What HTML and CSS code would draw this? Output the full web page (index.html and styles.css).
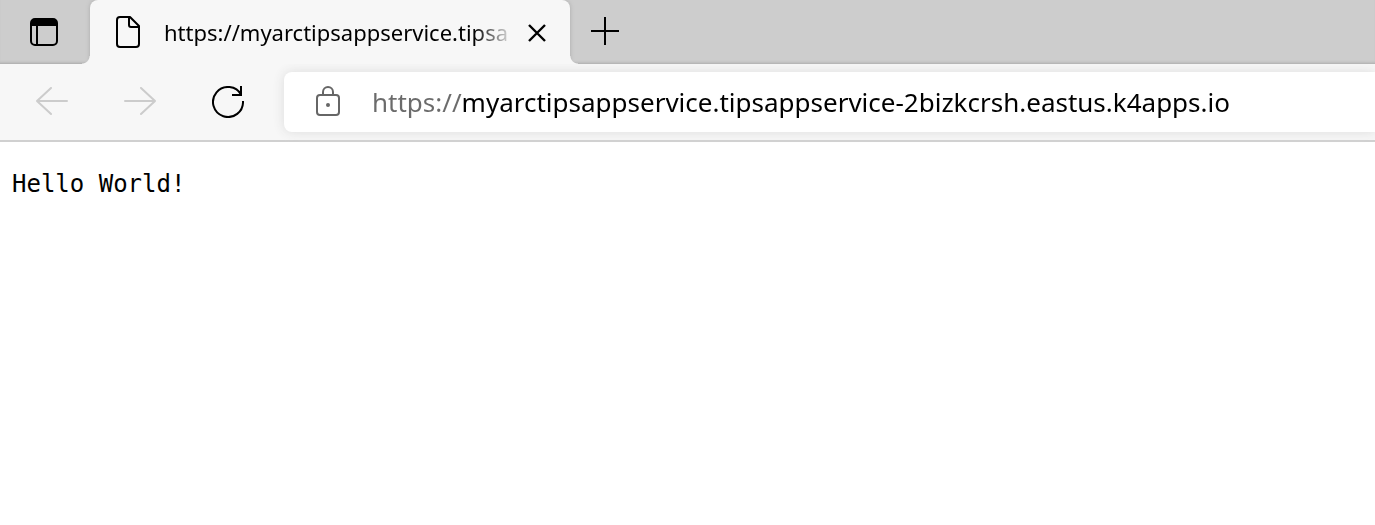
FILE: index.html
```html
<!DOCTYPE html>
<html lang="en">
<head>
<meta charset="utf-8">
<title>https://myarctipsappservice.tipsappservice-2bizkcrsh.eastus.k4apps.io</title>
<link rel="stylesheet" href="styles.css">
</head>
<body>
<header class="browser">
  <div class="tab-strip">
    <button class="icon-button tab-actions" type="button" aria-label="Tab actions menu">
      <svg width="28" height="28" viewBox="0 0 28 28" fill="none" stroke="#000" stroke-width="2"><rect x="1" y="1" width="26" height="26" rx="4"/><path d="M1 8V5a4 4 0 0 1 4-4h18a4 4 0 0 1 4 4v3z" fill="#000" stroke="none"/><path d="M1 7h26M7 7v20"/></svg>
    </button>
    <div class="tab">
      <svg class="tab-icon" width="24" height="32" viewBox="0 0 24 32" fill="none" stroke="#000" stroke-width="2" stroke-linejoin="round"><path d="M4 1h10l9 9v18a3 3 0 0 1-3 3H4a3 3 0 0 1-3-3V4a3 3 0 0 1 3-3z"/><path d="M13 1v8a2 2 0 0 0 2 2h8"/></svg>
      <span class="tab-title">https://myarctipsappservice.tipsa</span>
      <button class="icon-button" type="button" aria-label="Close tab">
        <svg width="18" height="20" viewBox="0 0 18 20" fill="none" stroke="#000" stroke-width="2.400"><path d="M1 3l16 16M17 3L1 19"/></svg>
      </button>
    </div>
    <button class="icon-button new-tab" type="button" aria-label="New tab">
      <svg width="28" height="28" viewBox="0 0 28 28" fill="none" stroke="#000" stroke-width="2"><path d="M14 0v28M0 14h28"/></svg>
    </button>
  </div>
  <div class="toolbar">
    <nav class="nav-buttons" aria-label="History">
      <button class="icon-button" type="button" aria-label="Back" disabled>
        <svg width="32" height="30" viewBox="0 0 32 30" fill="none" stroke="#ccc" stroke-width="2" stroke-linecap="round" stroke-linejoin="round"><path d="M15 1L1 14l14 13M1 14h30"/></svg>
      </button>
      <button class="icon-button" type="button" aria-label="Forward" disabled>
        <svg width="32" height="30" viewBox="0 0 32 30" fill="none" stroke="#ccc" stroke-width="2" stroke-linecap="round" stroke-linejoin="round"><path d="M17 1l14 13-14 13M31 14H1"/></svg>
      </button>
      <button class="icon-button" type="button" aria-label="Refresh">
        <svg width="32" height="32" viewBox="0 0 32 32" fill="none" stroke="#000" stroke-width="2"><path d="M30.970 15A15 15 0 1 1 29.270 9"/><path d="M29 0v9h-9"/></svg>
      </button>
    </nav>
    <div class="address-bar">
      <svg class="lock" width="24" height="32" viewBox="0 0 24 32" fill="none" stroke="#666" stroke-width="2"><rect x="1" y="9" width="22" height="20" rx="3"/><path d="M7 9V6a5 5 0 0 1 10 0v3"/><circle cx="12" cy="19" r="2" fill="#666" stroke="none"/></svg>
      <input class="address" type="text" aria-label="Address" spellcheck="false" value="https://myarctipsappservice.tipsappservice-2bizkcrsh.eastus.k4apps.io">
    </div>
  </div>
</header>
<main class="page">
  <pre class="response">Hello World!</pre>
</main>
</body>
</html>
```
FILE: styles.css
```css
* { box-sizing: border-box; }

body {
  margin: 0;
  background: #fff;
  color: #000;
  font-family: "Noto Sans", "Open Sans", sans-serif;
}

svg { display: block; flex: none; }

.icon-button {
  display: flex;
  align-items: center;
  justify-content: center;
  flex: none;
  padding: 0;
  border: 0;
  background: none;
}

.tab-strip {
  display: flex;
  height: 64px;
  background: #cdcdcd;
  box-shadow: inset 0 -3px 3px -2px #a8a8a8;
}

.tab-actions { width: 90px; padding-right: 2px; }

.tab {
  position: relative;
  display: flex;
  align-items: center;
  flex: 0 1 480px;
  min-width: 0;
  padding: 0 24px 0 26px;
  border-radius: 8px 8px 0 0;
  background: #f7f7f7;
  box-shadow: 0 0 4px #aaa;
  clip-path: inset(0 -8px);
}

.tab::before,
.tab::after {
  content: "";
  position: absolute;
  bottom: 0;
  width: 8px;
  height: 8px;
}

.tab::before {
  right: 100%;
  background: radial-gradient(circle at 0 0, transparent 7px, #f7f7f7 8px);
}

.tab::after {
  left: 100%;
  background: radial-gradient(circle at 100% 0, transparent 7px, #f7f7f7 8px);
}

.tab-title {
  flex: 1;
  min-width: 0;
  margin: 0 14px 0 24px;
  overflow: hidden;
  font-size: 22px;
  line-height: 32px;
  white-space: nowrap;
  mask-image: linear-gradient(to left, transparent, #000 40px);
}

.new-tab { width: 70px; padding-bottom: 2px; }

.toolbar {
  display: flex;
  align-items: center;
  height: 78px;
  padding-left: 36px;
  border-bottom: 2px solid #d0d0d0;
  background: #f7f7f7;
}

.nav-buttons { display: flex; gap: 56px; }

.address-bar {
  display: flex;
  align-items: center;
  flex: 1;
  min-width: 0;
  height: 60px;
  margin-left: 40px;
  padding-left: 32px;
  border-radius: 8px 0 0 8px;
  background: #fff;
  box-shadow: 0 0 12px #dcdcdc;
}

.address {
  flex: 1;
  min-width: 0;
  height: 40px;
  margin-left: 32px;
  padding: 0;
  border: 0;
  outline: 0;
  background: linear-gradient(to right, #6b6b6b 90px, #000 90px);
  background-clip: text;
  color: transparent;
  caret-color: #000;
  font-family: inherit;
  font-size: 26px;
}

.page { padding: 24px 12px; }

.response {
  margin: 0;
  font-family: "DejaVu Sans Mono", monospace;
  font-size: 24px;
  line-height: 36px;
}
```
